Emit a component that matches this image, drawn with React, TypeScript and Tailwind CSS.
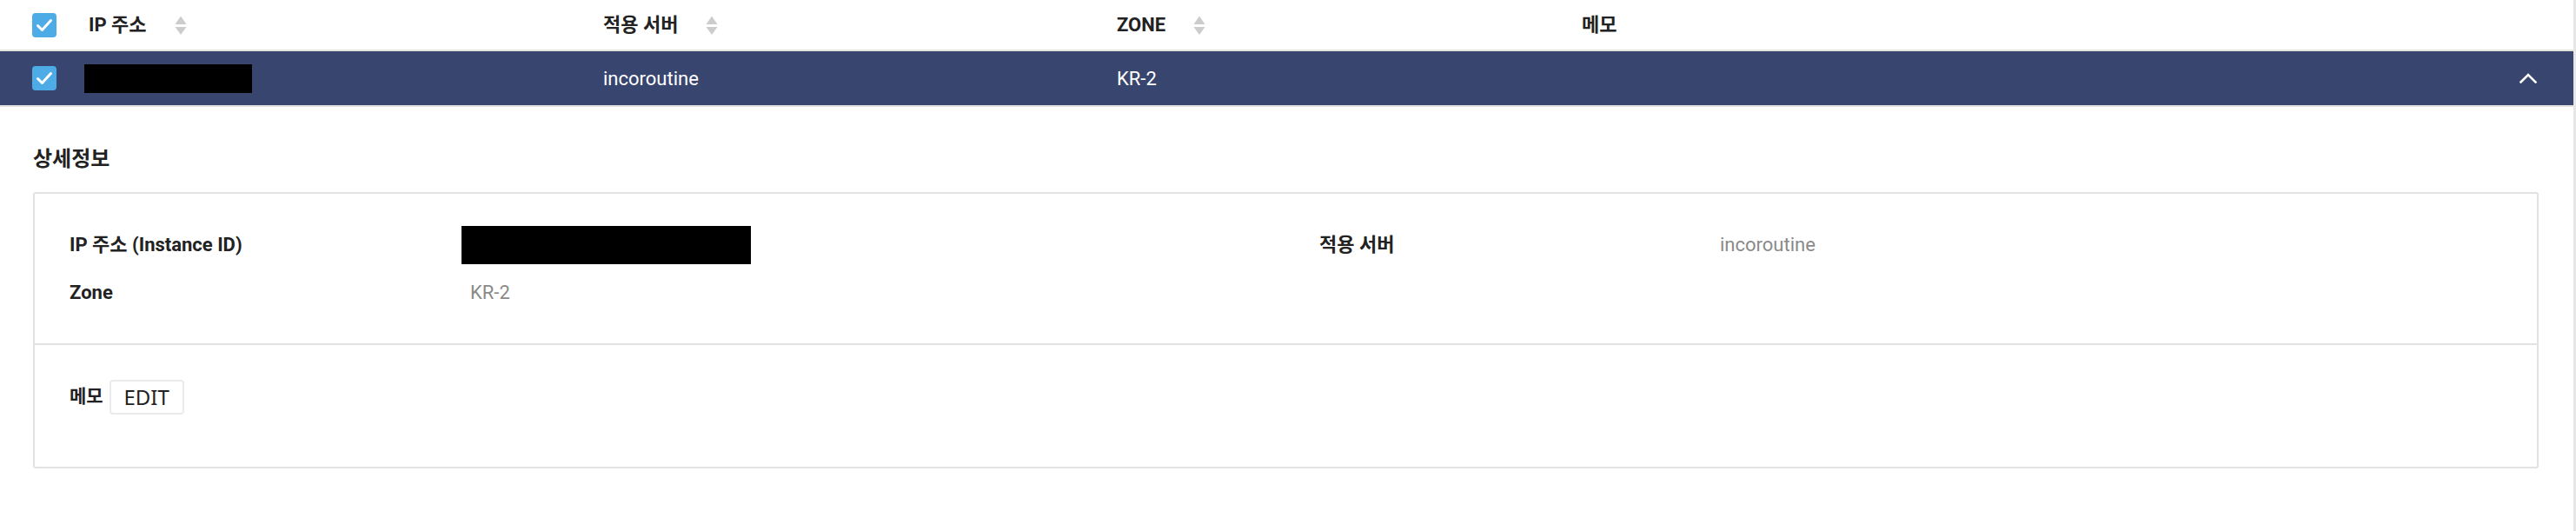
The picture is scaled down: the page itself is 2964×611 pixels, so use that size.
import React from "react";

const FONT = "font-['Roboto','Noto_Sans_CJK_KR',sans-serif]";

function Check() {
	return (
		<div className="w-[28px] h-[28px] rounded-[4px] bg-[#4dabe6] flex items-center justify-center">
			<svg width="28" height="28" viewBox="0 0 28 28" fill="none">
				<polyline
					points="6.5,14.5 11.5,19.5 21.5,8.5"
					stroke="#ffffff"
					strokeWidth="3"
					strokeLinecap="round"
					strokeLinejoin="round"
				/>
			</svg>
		</div>
	);
}

function SortIcon() {
	return (
		<svg width="14" height="22" viewBox="0 0 14 22" className="ml-[32px]">
			<path d="M7 0.5 L13.5 10 L0.5 10 Z" fill="#cccccc" />
			<path d="M0.5 13 L13.5 13 L7 22 Z" fill="#cccccc" />
		</svg>
	);
}

export default function App() {
	return (
		<div className={`flex w-full bg-white text-[#222222] ${FONT}`}>
			<div className="flex-1 min-w-0 h-[611px]">
				{/* table header */}
				<div className="flex items-center h-[59px] border-b-2 border-[#e2e2e2] text-[22px] font-bold">
					<div className="w-[102px] pl-[37px]">
						<Check />
					</div>
					<div className="w-[592px] flex items-center">
						<span>IP 주소</span>
						<SortIcon />
					</div>
					<div className="w-[591px] flex items-center">
						<span>적용 서버</span>
						<SortIcon />
					</div>
					<div className="w-[535px] flex items-center">
						<span>ZONE</span>
						<SortIcon />
					</div>
					<div className="flex-1">메모</div>
				</div>

				{/* selected row */}
				<div className="flex items-center h-[64px] bg-[#38466f] border-b-2 border-[#e2e2e2] text-white text-[22px]">
					<div className="w-[97px] pl-[37px]">
						<Check />
					</div>
					<div className="w-[597px]">
						<div className="w-[193px] h-[33px] bg-black" />
					</div>
					<div className="w-[591px]">incoroutine</div>
					<div className="flex-1">KR-2</div>
					<div className="pr-[42px]">
						<svg width="20" height="12" viewBox="0 0 20 12" fill="none">
							<polyline
								points="1.5,10.5 10,2 18.5,10.5"
								stroke="#ffffff"
								strokeWidth="2.6"
								strokeLinecap="square"
							/>
						</svg>
					</div>
				</div>

				{/* detail */}
				<div className="pl-[38px] pr-[40px] pt-[42px]">
					<h2 className="text-[24px] leading-[36px] font-semibold mb-[20px]">
						상세정보
					</h2>
					<div className="border-2 border-[#e2e2e2] rounded-[3px]">
						<div className="px-[40px] py-[31px] text-[22px]">
							<div className="flex items-center h-[55px]">
								<div className="w-[461px] font-bold">IP 주소 (Instance ID)</div>
								<div className="w-[977px]">
									<div className="-ml-[10px] w-[333px] h-[44px] bg-black" />
								</div>
								<div className="w-[461px] font-bold">적용 서버</div>
								<div className="flex-1 text-[#8a8a8a]">incoroutine</div>
							</div>
							<div className="flex items-center h-[55px]">
								<div className="w-[461px] font-bold">Zone</div>
								<div className="w-[977px] text-[#8a8a8a]">KR-2</div>
							</div>
						</div>
						<div className="border-t-2 border-[#e2e2e2] pl-[40px] pt-[40px] pb-[60px] flex items-center">
							<span className="font-['Noto_Sans_CJK_KR',sans-serif] font-bold text-[21px] mr-[7px] -mt-[4px]">
								메모
							</span>
							<button
								type="button"
								className="w-[86px] h-[40px] border-2 border-[#ebebeb] rounded-[4px] bg-white font-['Noto_Sans','Noto_Sans_CJK_KR',sans-serif] text-[24px] leading-none text-[#222222]"
							>
								EDIT
							</button>
						</div>
					</div>
				</div>
			</div>
			<div className="w-[3px] bg-[#e6e6e6]" />
		</div>
	);
}
